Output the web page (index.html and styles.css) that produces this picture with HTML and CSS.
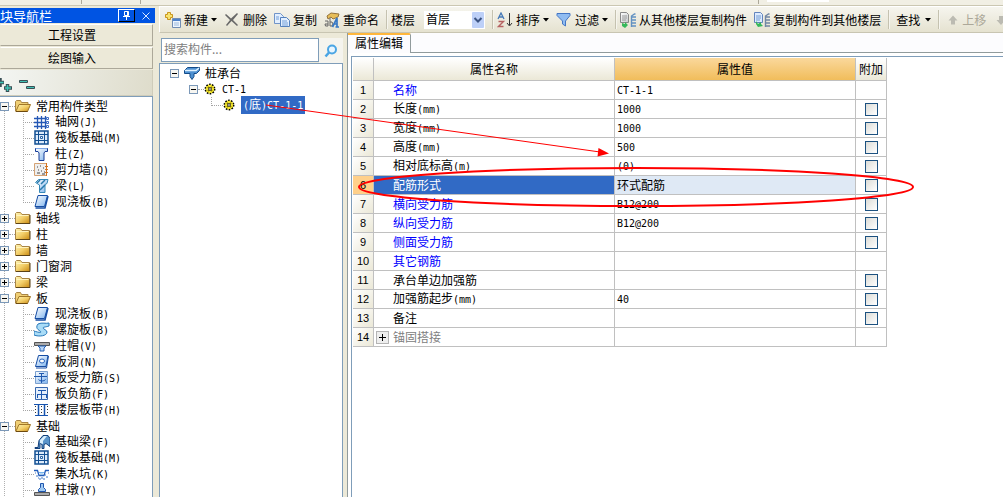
FILE: index.html
```html
<!DOCTYPE html>
<html lang="zh-CN">
<head>
<meta charset="utf-8">
<title>属性编辑</title>
<link rel="stylesheet" href="styles.css">
</head>
<body>
<svg class="sprite" aria-hidden="true">
  <defs>
    <linearGradient id="gold" x1="0" y1="0" x2="1" y2="1"><stop offset="0" stop-color="#fff6b8"/><stop offset=".5" stop-color="#f3cf6a"/><stop offset="1" stop-color="#c98a12"/></linearGradient>
    <linearGradient id="blue" x1="0" y1="0" x2="1" y2="1"><stop offset="0" stop-color="#ffffff"/><stop offset="1" stop-color="#7fb4ee"/></linearGradient>
    <linearGradient id="grey" x1="0" y1="0" x2="1" y2="1"><stop offset="0" stop-color="#ffffff"/><stop offset="1" stop-color="#c4c8cc"/></linearGradient>
  </defs>
  <symbol id="plus" viewBox="0 0 9 9"><rect x=".5" y=".5" width="8" height="8" fill="#f7f6f1" stroke="#7b98b8"/><path d="M2 4.500h5M4.500 2v5" stroke="#000"/></symbol>
  <symbol id="minus" viewBox="0 0 9 9"><rect x=".5" y=".5" width="8" height="8" fill="#f7f6f1" stroke="#7b98b8"/><path d="M2 4.500h5" stroke="#000"/></symbol>
  <symbol id="folder" viewBox="0 0 16 16"><path d="M.5 13.500V3.500l1-1h4l1.500 2h7.500v9z" fill="url(#gold)" stroke="#a98545"/><path d="M1 13.500h14V5" fill="none" stroke="#5b4216"/><path d="M1.500 5.500h12" stroke="#fff3bd"/></symbol>
  <symbol id="open" viewBox="0 0 16 16"><path d="M.5 13V3.500l1-1h4l1 2h6.500v2" fill="#f0cf75" stroke="#a98545"/><path d="M.8 13.500L4 6.500h11.500l-3 7z" fill="url(#gold)" stroke="#a07628"/><path d="M1 13.500h11.500" stroke="#6d4a10"/></symbol>
  <symbol id="grid" viewBox="0 0 16 16"><path d="M3.500 2v13M7.500 2v13M11.500 2v13M0 4.500h12M0 8.500h12M0 12.500h12" stroke="#2558b5" stroke-width="1.300"/><path d="M12.500 3.500h2v2h-2zM12.500 7.500h2v2h-2zM12.500 11.500h2v2h-2z" fill="#fff" stroke="#3d6cc4"/></symbol>
  <symbol id="raft" viewBox="0 0 16 16"><rect x="1" y="1" width="13" height="13" fill="#dceafa" stroke="#124f92" stroke-width="1.500"/><path d="M4.500 1v13M10.500 1v13M1 4.500h13M1 10.500h13" stroke="#124f92"/><path d="M6.500 6.500h2v2h-2z" fill="#fff" stroke="#2863a5"/></symbol>
  <symbol id="column" viewBox="0 0 16 16"><path d="M1.500 2.500h12v3h-2.500l-1 1.500v7.500h-5v-7.500l-1-1.500H1.500z" fill="url(#blue)" stroke="#173c97"/><path d="M2 2.500h11" stroke="#7da6e6"/></symbol>
  <symbol id="shear" viewBox="0 0 16 16"><path d="M.5 1.500h12v12H.5z" fill="#eee" stroke="#d4a274"/><path d="M3 5h1M6 4h1M9 6h1M4 8h1M7 9h1M10 10h1M3 11h3M8 12h3" stroke="#444"/><path d="M12.500 1v13M11 4.500h3M11 7.500h3M11 10.500h3" stroke="#d47320"/></symbol>
  <symbol id="beam" viewBox="0 0 16 16"><path d="M1.500 4.500l3-3h9.500l-1 4-2 1v8H5.500V7z" fill="url(#blue)" stroke="#3689b8"/><path d="M3 5l3-3M7 6l4-4M6 12l5-5" stroke="#287aad" stroke-width="1.500"/></symbol>
  <symbol id="slab" viewBox="0 0 16 16"><path d="M4 1.500h9.500l-3 11H1z" fill="url(#blue)" stroke="#164da4"/><path d="M1.500 14h9.500l3-12" fill="none" stroke="#164da4" stroke-width="1.500"/></symbol>
  <symbol id="spiral" viewBox="0 0 16 16"><path d="M4 2c4-2 8 0 11-1v3c-3 1-6 1-6 2s4 2 4 4c0 4-8 5-13 3V9c3 1 7 2 7 1S0 7 4 2z" fill="#a9dcf7" stroke="#2778ba"/></symbol>
  <symbol id="cap" viewBox="0 0 16 16"><path d="M.5 4.500h15v3H.5z" fill="#aaa" stroke="#555"/><path d="M4 8h8l-2 2v3H6v-3z" fill="#b9d6f7" stroke="#2460b4"/></symbol>
  <symbol id="hole" viewBox="0 0 16 16"><path d="M4.500 1.500h9.500l-2 11H1.500z" fill="url(#blue)" stroke="#164da4"/><path d="M2 14h10.500l2-12" fill="none" stroke="#164da4"/><ellipse cx="8" cy="7" rx="2.500" ry="2" fill="#fff" stroke="#2361bd"/></symbol>
  <symbol id="rebar" viewBox="0 0 16 16"><path d="M1.500 1.500h12v12h-12z" fill="url(#blue)" stroke="#7a9fce"/><path d="M0 6.500h13M7.500 3v10M5 3.500h5M4.500 9.500c1 2 6 2 7 0" fill="none" stroke="#1e58af"/></symbol>
  <symbol id="negative" viewBox="0 0 16 16"><path d="M1.500 1.500h12v12h-12z" fill="#e5effb" stroke="#3767ae"/><path d="M4 4.500h8M3 8.500h10M7.500 4v9M3.500 8v4M12.500 8v4" fill="none" stroke="#1e58af"/></symbol>
  <symbol id="band" viewBox="0 0 16 16"><path d="M0 2.500h14M1 13.500h13" stroke="#1753ae"/><path d="M4.500 3v10M10.500 3v10" stroke="#1753ae" stroke-width="1.500"/><path d="M7.500 4v9M1.500 4v9M13.500 4v9" stroke="#333" stroke-dasharray="1 2"/></symbol>
  <symbol id="fbeam" viewBox="0 0 16 16"><path d="M1 13.500h3l1-7 4-5h5l2 3v8l-4-3-2 1v4H8v-4l-2-1v5H1z" fill="#5a94ca" stroke="#123f7a"/><path d="M6 9V6l4-4h3L9 7v3" fill="#d9eefc"/></symbol>
  <symbol id="pit" viewBox="0 0 16 16"><path d="M0 4.500h3.500l1.500 5h5l1.500-5H15" fill="none" stroke="#225dbb" stroke-width="1.300"/><path d="M1 7h1M2 10h2M5 13h2M9 13h2M12 11h2M14 7h1M7 12h2M4 12h1M11 9h1" stroke="#4278c5"/><path d="M5 6.500h5M6 8h3" stroke="#74b3ec"/></symbol>
  <symbol id="pier" viewBox="0 0 16 16"><path d="M.5 10.500h15v3H.5z" fill="#aaa" stroke="#555"/><path d="M6.500 1.500h3v4l2 2v2h-7v-2l2-2z" fill="#9fc9f2" stroke="#1e55ae"/></symbol>
  <symbol id="pilecap" viewBox="0 0 16 16"><path d="M.5 5.500l3-3h12v3l-3 3H10v3l-2 3-2-3V8.500H.5z" fill="#4e91d2" stroke="#124b89"/><path d="M1 5.500h11l3-2.500" fill="none" stroke="#dff2ff" stroke-width="1.500"/></symbol>
  <symbol id="gear" viewBox="0 0 12 12"><circle cx="6" cy="6" r="4.700" fill="#f5e72b" stroke="#000" stroke-width="1.500" stroke-dasharray="1.600 1.350"/><circle cx="6" cy="6" r="3.500" fill="#f5e72b"/><path d="M4.500 3.500v5M7.500 3.500v5M3.500 4.500h5M3.500 7.500h5" stroke="#5b5300" stroke-width=".6"/><circle cx="6" cy="6" r="1.300" fill="#fff" stroke="#222" stroke-width=".8"/></symbol>
  <symbol id="new" viewBox="0 0 16 16"><path d="M7.500 6.500h8v9h-8z" fill="#edf5ff" stroke="#718db4"/><path d="M8 8h7" stroke="#4e82cb" stroke-width="2"/><path d="M9 11h5M9 13h5" stroke="#9cb9dc"/><path d="M2.500.500h3v2h2v3h-2v2h-3v-2h-2v-3h2z" fill="#f7e470" stroke="#c9941d"/></symbol>
  <symbol id="delete" viewBox="0 0 16 16"><path d="M2 2l5 4.500L13 1l1 1-5 6 5 5-1 1-5.500-5L3 14l-1-1 4-5-5-5z" fill="#686868"/></symbol>
  <symbol id="copy" viewBox="0 0 16 16"><path d="M.5 1.500h6l3 3v7h-9z" fill="#e2efff" stroke="#7094c8"/><path d="M6.500 5.500h6l3 3v6h-9z" fill="#e2efff" stroke="#5481bd"/><path d="M2 5h3M2 7h3M8 9h5M8 11h6M8 13h6" stroke="#729fd8"/></symbol>
  <symbol id="rename" viewBox="0 0 16 16"><path d="M3 4l4-3 8 1-1 3-5 2-2-2-3 2z" fill="#e7be59" stroke="#94733c"/><path d="M1 9h3v5H1.500L1 12h3M6 6v8h2l1-2-1-2H6" fill="none" stroke="#666"/><path d="M8.500 15L13 6v9M10 12h3M11.500 15H15" fill="none" stroke="#3979c4" stroke-width="1.700"/></symbol>
  <symbol id="sort" viewBox="0 0 16 16"><path d="M1 7l3-6 3 6M2 5h4" fill="none" stroke="#477ab8" stroke-width="1.300"/><path d="M1.500 9.500h5l-5 5h5" fill="none" stroke="#b66363" stroke-width="1.400"/><path d="M12.500 1v12M10 11l2.500 3 2.500-3" fill="none" stroke="#333"/></symbol>
  <symbol id="filter" viewBox="0 0 16 16"><path d="M1 1.500h13v2L9.500 9v5l-3-2V9L1 3.500z" fill="#90bcf1" stroke="#4476c4"/></symbol>
  <symbol id="from" viewBox="0 0 16 16"><path d="M.5.500h6l2 2v8h-8z" fill="url(#grey)" stroke="#888"/><path d="M2 4h5M2 6h5M2 8h4" stroke="#999"/><path d="M2 11l3 1v-2l3 3-3 3-3-2z" fill="#35b85b"/><path d="M11.500 15V4l3-2h1M11 5h5M11 8h5M11 11h5M11 14h5" fill="none" stroke="#6291c2" stroke-width="1.400"/></symbol>
  <symbol id="to" viewBox="0 0 16 16"><path d="M.5.500h6l2 2v8h-8z" fill="#dcebff" stroke="#6385bd"/><path d="M2 4h5M2 6h5M2 8h4" stroke="#739bd0"/><path d="M2 9l2 3 3-2v2l2 2-5 1-2-3z" fill="#35b85b"/><path d="M11.500 15V4l3-2h1M11 5h5M11 8h5M11 11h5M11 14h5" fill="none" stroke="#7187a4" stroke-width="1.400"/></symbol>
  <symbol id="up" viewBox="0 0 16 16"><path d="M10 3.500l4.500 5H12v4H8v-4H5.500z" fill="#bcbbb2"/></symbol>
  <symbol id="down" viewBox="0 0 16 16"><path d="M8 13l4.500-5H10V4H6v4H3.500z" fill="#bcbbb2"/></symbol>
  <symbol id="caret" viewBox="0 0 6 4"><path d="M0 0h6L3 3.500z" fill="#000"/></symbol>
</svg>

<div class="app">
  <div class="strip" aria-hidden="true"><i class="strip-a"></i><i class="strip-b"></i><i class="strip-c"></i><i class="strip-field"></i></div>
  <div class="main">
    <aside class="nav">
      <header class="nav-title">
        <h1>块导航栏</h1>
        <button class="pin" aria-label="固定"><svg viewBox="0 0 15 11"><path d="M5.500 1.500h4v4h-4zM4 6.500h7M7.500 7v3" fill="none" stroke="#fff"/><path d="M8.500 1v5" stroke="#fff"/></svg></button>
        <button class="close" aria-label="关闭"><svg viewBox="0 0 8 8"><path d="M.5.500l7 7M7.500.500l-7 7" stroke="#dbe7ff"/></svg></button>
      </header>
      <button class="section">工程设置</button>
      <button class="section">绘图输入</button>
      <div class="nav-tools">
        <button aria-label="全部展开"><svg viewBox="0 0 13 16"><path d="M0 1v9M0 5.500h4M7.500 7v8M4 11h8" fill="none" stroke="#3a4f55" stroke-width="3.500"/><path d="M0 5.500h3.500M7.500 8v6M5 11h6" stroke="#3fc2b4" stroke-width="1.500"/></svg></button>
        <button aria-label="全部折叠"><svg class="fold" viewBox="0 0 17 16"><path d="M.5 3.500h8v2h-8zM7.500 9.500h8v2h-8z" fill="#3fc2b4" stroke="#3a4f55"/></svg></button>
      </div>
      <ul class="tree nav-tree">
        <li><div class="row"><svg class="exp"><use href="#minus"/></svg><i class="stub"></i><svg class="icon"><use href="#open"/></svg><span>常用构件类型</span></div>
          <ul>
            <li class="row"><i class="stub"></i><svg class="icon"><use href="#grid"/></svg><span>轴网<b>(J)</b></span></li>
            <li class="row"><i class="stub"></i><svg class="icon"><use href="#raft"/></svg><span>筏板基础<b>(M)</b></span></li>
            <li class="row"><i class="stub"></i><svg class="icon"><use href="#column"/></svg><span>柱<b>(Z)</b></span></li>
            <li class="row"><i class="stub"></i><svg class="icon"><use href="#shear"/></svg><span>剪力墙<b>(Q)</b></span></li>
            <li class="row"><i class="stub"></i><svg class="icon"><use href="#beam"/></svg><span>梁<b>(L)</b></span></li>
            <li class="row"><i class="stub"></i><svg class="icon"><use href="#slab"/></svg><span>现浇板<b>(B)</b></span></li>
          </ul></li>
        <li><div class="row"><svg class="exp"><use href="#plus"/></svg><i class="stub"></i><svg class="icon"><use href="#folder"/></svg><span>轴线</span></div></li>
        <li><div class="row"><svg class="exp"><use href="#plus"/></svg><i class="stub"></i><svg class="icon"><use href="#folder"/></svg><span>柱</span></div></li>
        <li><div class="row"><svg class="exp"><use href="#plus"/></svg><i class="stub"></i><svg class="icon"><use href="#folder"/></svg><span>墙</span></div></li>
        <li><div class="row"><svg class="exp"><use href="#plus"/></svg><i class="stub"></i><svg class="icon"><use href="#folder"/></svg><span>门窗洞</span></div></li>
        <li><div class="row"><svg class="exp"><use href="#plus"/></svg><i class="stub"></i><svg class="icon"><use href="#folder"/></svg><span>梁</span></div></li>
        <li><div class="row"><svg class="exp"><use href="#minus"/></svg><i class="stub"></i><svg class="icon"><use href="#open"/></svg><span>板</span></div>
          <ul>
            <li class="row"><i class="stub"></i><svg class="icon"><use href="#slab"/></svg><span>现浇板<b>(B)</b></span></li>
            <li class="row"><i class="stub"></i><svg class="icon"><use href="#spiral"/></svg><span>螺旋板<b>(B)</b></span></li>
            <li class="row"><i class="stub"></i><svg class="icon"><use href="#cap"/></svg><span>柱帽<b>(V)</b></span></li>
            <li class="row"><i class="stub"></i><svg class="icon"><use href="#hole"/></svg><span>板洞<b>(N)</b></span></li>
            <li class="row"><i class="stub"></i><svg class="icon"><use href="#rebar"/></svg><span>板受力筋<b>(S)</b></span></li>
            <li class="row"><i class="stub"></i><svg class="icon"><use href="#negative"/></svg><span>板负筋<b>(F)</b></span></li>
            <li class="row"><i class="stub"></i><svg class="icon"><use href="#band"/></svg><span>楼层板带<b>(H)</b></span></li>
          </ul></li>
        <li><div class="row"><svg class="exp"><use href="#minus"/></svg><i class="stub"></i><svg class="icon"><use href="#open"/></svg><span>基础</span></div>
          <ul class="more">
            <li class="row"><i class="stub"></i><svg class="icon"><use href="#fbeam"/></svg><span>基础梁<b>(F)</b></span></li>
            <li class="row"><i class="stub"></i><svg class="icon"><use href="#raft"/></svg><span>筏板基础<b>(M)</b></span></li>
            <li class="row"><i class="stub"></i><svg class="icon"><use href="#pit"/></svg><span>集水坑<b>(K)</b></span></li>
            <li class="row"><i class="stub"></i><svg class="icon"><use href="#pier"/></svg><span>柱墩<b>(Y)</b></span></li>
          </ul></li>
      </ul>
    </aside>

    <section class="work">
      <div class="toolbar">
        <button class="tool"><svg class="icon"><use href="#new"/></svg>新建<svg class="caret"><use href="#caret"/></svg></button>
        <button class="tool"><svg class="icon"><use href="#delete"/></svg>删除</button>
        <button class="tool"><svg class="icon"><use href="#copy"/></svg>复制</button>
        <button class="tool"><svg class="icon"><use href="#rename"/></svg>重命名</button>
        <i class="sep"></i>
        <label class="floor-label" for="floor">楼层</label>
        <span class="combo"><select id="floor"><option>首层</option></select><svg viewBox="0 0 12 16" aria-hidden="true"><rect width="12" height="16" rx="1" fill="#bdd0f8"/><path d="M2.500 6L6 9.500 9.500 6" fill="none" stroke="#3c5483" stroke-width="2"/></svg></span>
        <i class="sep"></i>
        <button class="tool"><svg class="icon"><use href="#sort"/></svg>排序<svg class="caret"><use href="#caret"/></svg></button>
        <button class="tool"><svg class="icon"><use href="#filter"/></svg>过滤<svg class="caret"><use href="#caret"/></svg></button>
        <i class="sep"></i>
        <button class="tool"><svg class="icon"><use href="#from"/></svg>从其他楼层复制构件</button>
        <button class="tool"><svg class="icon"><use href="#to"/></svg>复制构件到其他楼层</button>
        <i class="sep"></i>
        <button class="tool plain">查找<svg class="caret"><use href="#caret"/></svg></button>
        <i class="sep"></i>
        <button class="tool" disabled><svg class="icon"><use href="#up"/></svg>上移</button>
        <button class="tool" disabled aria-label="下移"><svg class="icon"><use href="#down"/></svg></button>
      </div>

      <div class="content">
        <div class="components">
          <div class="search">
            <input type="text" placeholder="搜索构件..." aria-label="搜索构件">
            <button aria-label="搜索"><svg viewBox="0 0 14 14"><circle cx="8" cy="5.500" r="4" fill="#e7f5ff" stroke="#4aa5e4" stroke-width="2"/><path d="M5 8.500L1.500 12.500" stroke="#4aa5e4" stroke-width="2.500"/></svg></button>
          </div>
          <ul class="tree comp-tree">
            <li><div class="row"><svg class="exp"><use href="#minus"/></svg><svg class="icon"><use href="#pilecap"/></svg><span>桩承台</span></div>
              <ul>
                <li><div class="row"><svg class="exp"><use href="#minus"/></svg><i class="stub"></i><svg class="gear"><use href="#gear"/></svg><span><b>CT-1</b></span></div>
                  <ul><li class="row"><i class="stub"></i><svg class="gear"><use href="#gear"/></svg><span class="selected"><b>(</b>底<b>)CT-1-1</b></span></li></ul>
                </li>
              </ul></li>
          </ul>
        </div>

        <div class="props">
          <div class="tabs"><button class="tab">属性编辑</button><i class="tab-line"></i></div>
          <div class="sheet">
            <table>
              <colgroup><col class="c-num"><col class="c-name"><col class="c-value"><col class="c-add"></colgroup>
              <thead><tr><th></th><th>属性名称</th><th class="hot">属性值</th><th>附加</th></tr></thead>
              <tbody>
                <tr><th>1</th><td class="name key">名称</td><td><b>CT-1-1</b></td><td></td></tr>
                <tr><th>2</th><td class="name">长度<b>(mm)</b></td><td><b>1000</b></td><td class="add"><input type="checkbox" aria-label="附加 长度"></td></tr>
                <tr><th>3</th><td class="name">宽度<b>(mm)</b></td><td><b>1000</b></td><td class="add"><input type="checkbox" aria-label="附加 宽度"></td></tr>
                <tr><th>4</th><td class="name">高度<b>(mm)</b></td><td><b>500</b></td><td class="add"><input type="checkbox" aria-label="附加 高度"></td></tr>
                <tr><th>5</th><td class="name">相对底标高<b>(m)</b></td><td><b>(0)</b></td><td class="add"><input type="checkbox" aria-label="附加 相对底标高"></td></tr>
                <tr class="current"><th>6</th><td class="name">配筋形式</td><td class="value">环式配筋</td><td class="add"><input type="checkbox" aria-label="附加 配筋形式"></td></tr>
                <tr><th>7</th><td class="name key">横向受力筋</td><td><b>B12@200</b></td><td class="add"><input type="checkbox" aria-label="附加 横向受力筋"></td></tr>
                <tr><th>8</th><td class="name key">纵向受力筋</td><td><b>B12@200</b></td><td class="add"><input type="checkbox" aria-label="附加 纵向受力筋"></td></tr>
                <tr><th>9</th><td class="name key">侧面受力筋</td><td></td><td class="add"><input type="checkbox" aria-label="附加 侧面受力筋"></td></tr>
                <tr><th>10</th><td class="name key">其它钢筋</td><td></td><td></td></tr>
                <tr><th>11</th><td class="name">承台单边加强筋</td><td></td><td class="add"><input type="checkbox" aria-label="附加 承台单边加强筋"></td></tr>
                <tr><th>12</th><td class="name">加强筋起步<b>(mm)</b></td><td><b>40</b></td><td class="add"><input type="checkbox" aria-label="附加 加强筋起步"></td></tr>
                <tr><th>13</th><td class="name">备注</td><td></td><td class="add"><input type="checkbox" aria-label="附加 备注"></td></tr>
                <tr><th>14</th><td class="group"><div><button aria-label="展开"><svg viewBox="0 0 11 11"><path d="M2 5.500h7M5.500 2v7" stroke="#000"/></svg></button>锚固搭接</div></td><td></td><td></td></tr>
              </tbody>
            </table>
          </div>
        </div>
      </div>
    </section>
  </div>

  <svg class="marks" width="930" height="220" viewBox="0 0 930 220" aria-hidden="true">
    <path d="M266 105L600 152" stroke="#f00" fill="none"/>
    <path d="M609 153.500L597.500 156.500 598.500 148z" fill="#f00"/>
    <ellipse cx="636" cy="187" rx="277" ry="19" fill="none" stroke="#f00" stroke-width="2"/>
  </svg>
</div>
</body>
</html>
```
FILE: styles.css
```css
* { box-sizing: border-box; }

body {
  margin: 0;
  background: #ece9d8;
  color: #000;
  font: 12px/16px "Noto Sans CJK SC", sans-serif;
}

button, input, select {
  margin: 0;
  padding: 0;
  border: 0;
  background: none;
  color: inherit;
  font: inherit;
}

ul { margin: 0; padding: 0; list-style: none; }
svg { display: block; flex: none; }
b { font: 10px/16px "DejaVu Sans Mono", monospace; }

.sprite { position: absolute; width: 0; height: 0; }

.app {
  position: relative;
  display: flex;
  flex-direction: column;
  height: 100vh;
  overflow: hidden;
}

.icon { width: 16px; height: 16px; }
.exp { width: 9px; height: 9px; }
.gear { width: 12px; height: 12px; }
.caret { width: 6px; height: 4px; }

/* Lower edge of the upper toolbar */
.strip {
  display: flex;
  flex: none;
  height: 6px;
  padding-left: 81px;
  background: #f1efe4;
  border-bottom: 1px solid #cbc7b2;
}
.strip i { height: 4px; border-left: 1px solid #aca899; }
.strip-a { width: 59px; }
.strip-b { width: 618px; }
.strip-c { width: 9px; }
.strip .strip-field { width: 62px; height: 2px; border: 0; background: #fff; }

.main { display: flex; flex: 1; min-height: 0; }

/* Navigation panel */
.nav {
  display: flex;
  flex-direction: column;
  flex: none;
  width: 155px;
  margin-right: 4px;
  padding-top: 2px;
}
.nav-title {
  display: flex;
  align-items: center;
  flex: none;
  height: 15px;
  padding-right: 5px;
  background: #0054e3;
  color: #fff;
}
.nav-title h1 { flex: 1; margin: 0; font-size: 13px; font-weight: 400; line-height: 15px; }
.pin { width: 17px; height: 13px; border: 1px solid; border-color: #fff #000 #000 #fff; }
.pin svg { width: 15px; height: 11px; }
.close { margin-left: 7px; }
.close svg { width: 8px; height: 8px; }

.section {
  flex: none;
  height: 22px;
  margin: 1px 2px 0 0;
  padding-right: 9px;
  background: #ece9d8;
  border: 1px solid;
  border-color: #fff #aca899 #aca899 #ece9d8;
}
.nav-tools {
  display: flex;
  gap: 6px;
  flex: none;
  height: 26px;
  margin: 1px 2px 0 0;
  padding-top: 5px;
  background: linear-gradient(100deg, #f3f5f2, #dedccb);
  border: solid #cfccba;
  border-width: 0 1px 1px 0;
}
.nav-tools svg { width: 13px; height: 16px; }
.nav-tools .fold { width: 17px; }

/* Trees */
.row { display: flex; align-items: center; height: 16px; white-space: nowrap; }
.stub { flex: none; width: 6px; border-top: 1px dotted #a5a5a5; }
.tree ul { background: repeating-linear-gradient(#b0b0b0 0 1px, transparent 1px 2px) no-repeat; }

.nav-tree {
  flex: 1;
  min-height: 0;
  margin-right: 2px;
  padding-top: 1px;
  overflow: hidden;
  background: repeating-linear-gradient(#b0b0b0 0 1px, transparent 1px 2px) 4px 8px / 1px 100% no-repeat #fff;
  border: solid #7f9db9;
  border-width: 1px 1px 0 0;
}
.nav-tree .icon { margin-right: 5px; }
.nav-tree ul { margin-left: 23px; background-size: 1px calc(100% - 8px); }
.nav-tree ul.more { background-size: 1px 100%; }
.nav-tree ul .stub { width: 11px; }

/* Toolbar */
.work { display: flex; flex-direction: column; flex: 1; min-width: 0; }
.toolbar {
  display: flex;
  align-items: center;
  flex: none;
  height: 27px;
  padding-left: 5px;
  overflow: hidden;
  background: linear-gradient(#f6f5ee, #e5e2d0);
  border: solid;
  border-width: 1px 0 1px 1px;
  border-color: #fff #c8c5b2 #c8c5b2 #fff;
  white-space: nowrap;
}
.tool { display: flex; align-items: center; flex: none; gap: 3px; padding-right: 7px; }
.tool.plain { padding-left: 3px; gap: 5px; }
.tool:disabled { color: #aca899; }
.sep { flex: none; width: 2px; height: 19px; margin-right: 3px; background: #c5c2b0; border-right: 1px solid #f6f5ee; }
.floor-label { flex: none; margin-right: 9px; }
.combo { display: flex; align-items: center; flex: none; width: 61px; height: 18px; margin-right: 7px; padding-right: 1px; background: #fff; }
.combo select { flex: 1; min-width: 0; height: 18px; padding: 0 0 2px 2px; appearance: none; }
.combo svg { width: 12px; height: 16px; pointer-events: none; }

.content { display: flex; flex: 1; min-height: 0; }

/* Component list */
.components { display: flex; flex-direction: column; flex: none; width: 184px; margin-right: 4px; padding-top: 5px; }
.search { display: flex; flex: none; height: 25px; }
.search input { width: 158px; height: 24px; margin-left: 2px; padding: 0 2px 4px; background: #fff; border: 1px solid #7f9db9; }
.search input::placeholder { color: #808080; opacity: 1; }
.search button { display: flex; align-items: center; justify-content: center; flex: 1; background: #f5f4ee; }
.search svg { width: 14px; height: 14px; }
.comp-tree { flex: 1; padding: 1px 0 0 10px; background: #fff; border: 1px solid #7f9db9; border-bottom: 0; }
.comp-tree .icon { margin: 0 5px; }
.comp-tree .gear { margin-right: 6px; }
.comp-tree ul { margin-left: 19px; background: none; }
.comp-tree ul ul { margin-left: 22px; }
.comp-tree ul ul .stub { width: 12px; height: 9px; margin-bottom: 8px; border: dotted #a5a5a5; border-width: 0 0 1px 1px; }
.comp-tree .selected { padding: 0 2px; background: #316ac5; color: #fff; }

/* Property editor */
.props { display: flex; flex-direction: column; flex: 1; min-width: 0; background: #fff; border-left: 1px solid #919b9c; }
.tabs { display: flex; flex: none; height: 20px; background: #fcfcfe; }
.tab { width: 63px; padding-bottom: 2px; background: #fcfcfe; border-top: 2px solid #ffb73c; border-right: 1px solid #919b9c; border-radius: 0 2px 0 0; line-height: 16px; }
.tab-line { flex: 1; border-bottom: 1px solid #919b9c; }
.sheet { flex: 1; margin: 3px 0 0 3px; padding: 1px 0 0 1px; border: solid #7f9db9; border-width: 1px 0 0 1px; }

table { width: 534px; border-collapse: separate; border-spacing: 0; table-layout: fixed; }
.c-num { width: 21px; }
.c-name, .c-value { width: 241px; }
.c-add { width: 31px; }
th, td { height: 19px; padding: 0 0 0 2px; border: solid #c0c0c0; border-width: 0 1px 1px 0; line-height: 16px; text-align: left; }
th { padding: 0; background: linear-gradient(135deg, #fff, #ebe8d7); font-weight: 400; text-align: center; }
tbody th { font: 11px/16px "Liberation Sans", sans-serif; }
thead th { height: 23px; background: linear-gradient(#fff, #ebe8d7); }
thead .hot { background: linear-gradient(#fad89c, #f1bd5b); }
.name { padding-left: 19px; }
.key { color: #00f; }
.current th { background: #ffd08a; }
.current .name { background: #316ac5; color: #fff; }
.current .value { background: #dfe9f5; }
.add { padding: 0; }
.add input { display: block; width: 13px; height: 13px; margin: 0 auto; appearance: none; background: linear-gradient(135deg, #dcdcd7, #fff); border: 1px solid #1c5180; }
.group { color: #808080; }
.group div { display: flex; align-items: center; gap: 4px; height: 16px; }
.group button { width: 13px; height: 13px; background: #eee; border: 1px solid #b4b4b4; }
.group svg { width: 11px; height: 11px; }

/* Red annotation drawn over the window */
.marks { position: absolute; top: 0; left: 0; pointer-events: none; }
```
